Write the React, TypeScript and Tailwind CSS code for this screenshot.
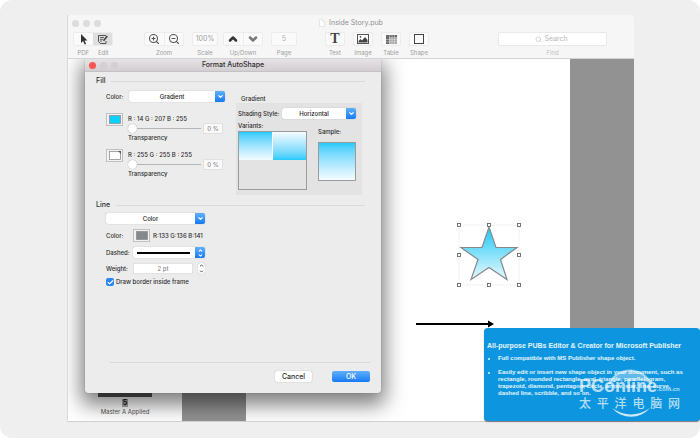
import type { ReactNode } from "react";
import clsx from "clsx";
import { Check, ChevronDown, ChevronUp, Search, ZoomIn, ZoomOut } from "lucide-react";

function TrafficLights({ active = false }: { active?: boolean }) {
  return (
    <div className="flex gap-1">
      <span className={clsx("h-[7px] w-[7px] rounded-full", active ? "bg-[#fc5650]" : "bg-[#dcdcdc]")} />
      <span className={clsx("h-[7px] w-[7px] rounded-full", active ? "bg-[#d2d0d2]" : "bg-[#dcdcdc]")} />
      <span className={clsx("h-[7px] w-[7px] rounded-full", active ? "bg-[#d2d0d2]" : "bg-[#dcdcdc]")} />
    </div>
  );
}

function ToolGroup({ labels, className, children }: { labels: string[]; className?: string; children: ReactNode }) {
  return (
    <div className={clsx("flex shrink-0 flex-col gap-[3px]", className)}>
      <div className="flex h-[14px] overflow-hidden rounded-xs border border-[#ececec] bg-[#fafafa]">{children}</div>
      <div className="flex justify-around text-[6px] leading-[8px] text-[#a0a0a0]">
        {labels.map((label) => (
          <span key={label}>{label}</span>
        ))}
      </div>
    </div>
  );
}

function ToolButton({ label, className, children }: { label: string; className?: string; children: ReactNode }) {
  return (
    <button type="button" aria-label={label} className={clsx("flex flex-1 items-center justify-center", className)}>
      {children}
    </button>
  );
}

function Toolbar() {
  return (
    <header className="h-[44px] shrink-0 rounded-t border-b border-[#d4d4d4] bg-[#f6f6f6]">
      <div className="relative flex h-4 items-center justify-center">
        <div className="absolute left-1">
          <TrafficLights />
        </div>
        <div className="flex items-center gap-1 text-[7px] leading-[8px] text-[#8f8f8f]">
          <svg width="6" height="8" viewBox="0 0 6 8" fill="#fff" stroke="#d8d8d8" strokeWidth=".6">
            <path d="M.5.5h3l2 2v5h-5z" />
            <path d="M3.5.5v2h2" />
          </svg>
          <h1>Inside Story.pub</h1>
        </div>
      </div>

      <div className="flex pt-px pr-[27px] pl-[5px]">
        <ToolGroup labels={["PDF", "Edit"]} className="w-10">
          <ToolButton label="PDF">
            <svg width="8" height="11" viewBox="0 0 8 11" fill="#333">
              <path d="M1 0v9l2.1-2 1.5 3.6 1.5-.7L4.600 6.500h2.900z" />
            </svg>
          </ToolButton>
          <ToolButton label="Edit" className="bg-[#dedede]">
            <svg width="11" height="11" viewBox="0 0 11 11" fill="none" stroke="#444">
              <path d="M9 1.500H1.500v6l2 2H9V7" strokeWidth=".9" />
              <path d="M3 3.500h4M3 5.300h3M3 7h2" strokeWidth=".8" />
              <path d="M10.300 2 6.500 6.800" strokeWidth="1.600" />
            </svg>
          </ToolButton>
        </ToolGroup>
        <ToolGroup labels={["Zoom"]} className="ml-[31px] w-10">
          <ToolButton label="Zoom in">
            <ZoomIn size={12} color="#555" strokeWidth={2.200} />
          </ToolButton>
          <ToolButton label="Zoom out" className="border-l border-[#ececec]">
            <ZoomOut size={12} color="#555" strokeWidth={2.200} />
          </ToolButton>
        </ToolGroup>
        <ToolGroup labels={["Scale"]} className="ml-2 w-[26px]">
          <input aria-label="Scale" defaultValue="100%" className="w-full text-center text-[7px] text-[#a0a0a0]" />
        </ToolGroup>
        <ToolGroup labels={["Up/Down"]} className="ml-[5px] w-10">
          <ToolButton label="Up">
            <ChevronUp size={12} color="#333" strokeWidth={5} />
          </ToolButton>
          <ToolButton label="Down" className="border-l border-[#ececec]">
            <ChevronDown size={12} color="#777" strokeWidth={5} />
          </ToolButton>
        </ToolGroup>
        <ToolGroup labels={["Page"]} className="ml-2 w-[26px]">
          <input aria-label="Page" defaultValue="5" className="w-full text-center text-[7px] text-[#b0b0b0]" />
        </ToolGroup>

        <ToolGroup labels={["Text"]} className="ml-[28px] w-5">
          <ToolButton label="Text">
            <span className="font-['Liberation_Serif',serif] text-[14px] leading-[12px] font-bold text-[#444]">T</span>
          </ToolButton>
        </ToolGroup>
        <ToolGroup labels={["Image"]} className="ml-2 w-5">
          <ToolButton label="Image">
            <svg width="12" height="10" viewBox="0 0 12 10">
              <rect x=".5" y=".5" width="11" height="9" fill="#fff" stroke="#555" />
              <path d="M1.500 8.500V7l2-2 1.500 1.500L8 3l2.500 3v2.500z" fill="#444" />
              <circle cx="3.500" cy="2.800" r=".9" fill="#444" />
            </svg>
          </ToolButton>
        </ToolGroup>
        <ToolGroup labels={["Table"]} className="ml-2 w-5">
          <ToolButton label="Table">
            <svg width="11" height="9" viewBox="0 0 11 9">
              <rect width="11" height="9" fill="#a5a5a5" />
              <path d="M0 0h11v2H0zM0 2h3v7H0z" fill="#6a6a6a" />
              <path d="M3.500 0v9M6 0v9M8.500 0v9M0 4.500h11M0 6.800h11" stroke="#e2e2e2" strokeWidth=".5" />
            </svg>
          </ToolButton>
        </ToolGroup>
        <ToolGroup labels={["Shape"]} className="ml-2 w-5">
          <ToolButton label="Shape">
            <span className="h-[10px] w-[10px] border border-[#444]" />
          </ToolButton>
        </ToolGroup>

        <div className="ml-auto flex w-[109px] flex-col gap-[3px]">
          <label className="flex h-[14px] items-center justify-center gap-[3px] rounded-xs border border-[#e9e9e9] bg-white">
            <Search size={7} color="#bbb" />
            <input
              type="text"
              aria-label="Find"
              placeholder="Search"
              className="w-[26px] text-[7px] leading-[8px] placeholder:text-[#b8b8b8]"
            />
          </label>
          <span className="text-center text-[6px] leading-[8px] text-[#c4c4c4]">Find</span>
        </div>
      </div>
    </header>
  );
}

function Dropdown({ label, value, className }: { label: string; value: string; className?: string }) {
  return (
    <div className={clsx("flex h-[11px] overflow-hidden rounded-xs bg-white shadow-[0_0_1px_#999]", className)}>
      <select
        aria-label={label}
        className="min-w-0 flex-1 appearance-none text-center text-[6px] leading-[11px] font-medium text-[#222] [text-align-last:center]"
      >
        <option>{value}</option>
      </select>
      <span className="flex w-[10px] items-center justify-center bg-linear-to-b from-[#5fb0fa] to-[#1479f5]">
        <ChevronDown size={7} color="#fff" strokeWidth={4} />
      </span>
    </div>
  );
}

function Swatch({ label, fill, corner = false }: { label: string; fill: string; corner?: boolean }) {
  return (
    <button
      type="button"
      aria-label={label}
      className="flex h-[13px] w-[17px] shrink-0 items-center justify-center border border-[#c0c0c0] bg-[#f2f2f2]"
    >
      <svg width="12" height="9" viewBox="0 0 12 9">
        <rect x=".5" y=".5" width="11" height="8" fill={fill} stroke="#8f8f8f" strokeWidth=".8" />
        {corner && <path d="M9 0h3v3z" fill="#555" />}
      </svg>
    </button>
  );
}

function ColorStop({ id, rgb, fill, corner }: { id: string; rgb: string; fill: string; corner?: boolean }) {
  return (
    <div className="flex h-9 gap-[5px]">
      <Swatch label={rgb} fill={fill} corner={corner} />
      <div className="flex-1 pt-[2px]">
        <p className="leading-[8px] whitespace-nowrap">{rgb}</p>
        <div className="flex h-[11px] items-center">
          <input
            id={id}
            type="range"
            defaultValue={0}
            className="h-[9px] w-[73px] appearance-none bg-[linear-gradient(#b4b4b4,#b4b4b4)] bg-[length:100%_1px] bg-center bg-no-repeat [&::-webkit-slider-thumb]:h-[9px] [&::-webkit-slider-thumb]:w-[9px] [&::-webkit-slider-thumb]:appearance-none [&::-webkit-slider-thumb]:rounded-full [&::-webkit-slider-thumb]:bg-white [&::-webkit-slider-thumb]:shadow-[0_0_1px_#888]"
          />
          <input
            aria-label={`${rgb} transparency`}
            defaultValue="0 %"
            className="ml-[2px] h-[11px] w-5 border border-[#e0e0e0] bg-[#f9f9f9] text-center text-[6px] text-[#888]"
          />
        </div>
        <label htmlFor={id} className="block leading-[8px]">
          Transparency
        </label>
      </div>
    </div>
  );
}

function SectionTitle({ children }: { children: ReactNode }) {
  return (
    <div className="flex items-center gap-[6px] pr-[5px]">
      <h3 className="text-[7px] leading-[10px]">{children}</h3>
      <span className="h-px flex-1 bg-[#dadada]" />
    </div>
  );
}

function FillSection() {
  return (
    <section>
      <SectionTitle>Fill</SectionTitle>
      <div className="flex pt-[5px] pl-[10px]">
        <div className="w-[119px]">
          <div className="flex h-[11px] items-center justify-between">
            <span>Color:</span>
            <Dropdown label="Fill color" value="Gradient" className="w-24" />
          </div>
          <div className="pt-[11px]">
            <ColorStop id="first-transparency" rgb="R : 14 G : 207 B : 255" fill="#0ecfff" />
            <ColorStop id="second-transparency" rgb="R : 255 G : 255 B : 255" fill="#ffffff" corner />
          </div>
        </div>

        <div className="ml-[11px] w-[126px] pt-[4px]">
          <h4 className="pl-[5px] leading-[8px]">Gradient</h4>
          <div className="h-[92px] border border-[#e2e2e2] bg-[#e3e3e3] pt-[4px] pr-[5px] pl-px">
            <div className="flex items-center justify-between">
              <span className="whitespace-nowrap">Shading Style:</span>
              <Dropdown label="Shading Style" value="Horizontal" className="w-[74px]" />
            </div>
            <div className="flex gap-[11px] pt-[3px]">
              <div>
                <p className="leading-[8px]">Variants:</p>
                <div className="mt-px flex h-[59px] w-[69px] items-start border border-[#9b9b9b]">
                  <button
                    type="button"
                    aria-label="Light bottom"
                    className="h-[28px] flex-1 bg-linear-to-b from-[#1ecbfa] to-[#f4fcff]"
                  />
                  <button
                    type="button"
                    aria-label="Light top"
                    className="h-[28px] flex-1 border-l border-white bg-linear-to-b from-[#f4fcff] to-[#1ecbfa]"
                  />
                </div>
              </div>
              <div className="pt-[6px]">
                <p className="leading-[8px]">Sample:</p>
                <div className="mt-[6px] h-[39px] w-[38px] border border-[#9b9b9b] bg-linear-to-b from-[#1ecbfa] to-[#f4fcff]" />
              </div>
            </div>
          </div>
        </div>
      </div>
    </section>
  );
}

function LineSection() {
  return (
    <section className="pt-[5px]">
      <SectionTitle>Line</SectionTitle>
      <div className="flex w-[109px] flex-col gap-[5px] pt-[3px] pl-[10px]">
        <Dropdown label="Line type" value="Color" />
        <div className="flex items-center">
          <span className="w-[27px]">Color:</span>
          <Swatch label="Line color" fill="#85888d" />
          <span className="ml-[3px] whitespace-nowrap">R:133 G:136 B:141</span>
        </div>
        <div className="flex h-[11px] items-center">
          <label htmlFor="dashed" className="w-[27px]">
            Dashed:
          </label>
          <div className="relative flex h-[11px] flex-1 overflow-hidden rounded-xs bg-white shadow-[0_0_1px_#999]">
            <select id="dashed" className="min-w-0 flex-1 appearance-none">
              <option aria-label="Solid" />
            </select>
            <span className="pointer-events-none absolute inset-x-[4px] top-[5px] mr-[11px] h-[2px] bg-black" />
            <span className="flex w-[10px] flex-col items-center justify-center bg-linear-to-b from-[#5fb0fa] to-[#1479f5]">
              <ChevronUp size={5} color="#fff" strokeWidth={5} />
              <ChevronDown size={5} color="#fff" strokeWidth={5} />
            </span>
          </div>
        </div>
        <div className="flex h-[11px] items-center">
          <label htmlFor="weight" className="w-[27px]">
            Weight:
          </label>
          <input
            id="weight"
            defaultValue="2 pt"
            className="h-[11px] w-[60px] border border-[#e2e2e2] bg-white text-center text-[6px] text-[#888]"
          />
          <button
            type="button"
            aria-label="Change weight"
            className="ml-auto flex h-[11px] w-[7px] flex-col items-center justify-between rounded-[3px] bg-white shadow-[0_0_1px_#999]"
          >
            <ChevronUp size={5} color="#333" strokeWidth={4} />
            <ChevronDown size={5} color="#333" strokeWidth={4} />
          </button>
        </div>
      </div>
      <label className="flex items-center gap-[2px] pt-[4px] pl-[10px] leading-[8px]">
        <span className="relative flex h-2 w-2 items-center justify-center">
          <input
            type="checkbox"
            defaultChecked
            className="peer h-2 w-2 appearance-none rounded-xs bg-white checked:bg-[#2a87f6]"
          />
          <Check
            size={7}
            color="#fff"
            strokeWidth={4}
            className="pointer-events-none absolute hidden peer-checked:block"
          />
        </span>
        Draw border inside frame
      </label>
    </section>
  );
}

function FormatDialog() {
  return (
    <div
      role="dialog"
      aria-label="Format AutoShape"
      className="absolute top-0 left-[17px] w-[296px] rounded-b-[3px] bg-[#ececec] text-[6px] font-medium text-[#2c2c2c] shadow-[0_8px_20px_4px_rgba(0,0,0,0.5),0_0_1px_#777]"
    >
      <div className="relative flex h-[13px] items-center justify-center border-b border-[#c4c2c4] bg-linear-to-b from-[#e6e2e6] to-[#d2ced2]">
        <div className="absolute left-1">
          <TrafficLights active />
        </div>
        <h2 className="text-[7px] leading-[10px]">Format AutoShape</h2>
      </div>
      <div className="px-[11px] pt-[4px] pb-[11px]">
        <FillSection />
        <LineSection />
        <div className="mt-[76px] ml-[14px] flex justify-end gap-5 border-t border-[#dadada] pt-[8px]">
          <button
            type="button"
            className="h-[11px] w-[37px] rounded-xs bg-white text-[7px] leading-[11px] shadow-[0_0_1px_#888]"
          >
            Cancel
          </button>
          <button
            type="button"
            className="h-[11px] w-[38px] rounded-xs bg-linear-to-b from-[#5fb0fa] to-[#1479f5] text-[7px] leading-[11px] text-white"
          >
            OK
          </button>
        </div>
      </div>
    </div>
  );
}

const HANDLES = [
  [2, 2], [32, 2], [62, 2], [2, 32], [62, 32], [2, 62], [32, 62], [62, 62],
];

function Canvas() {
  return (
    <div className="relative flex-1 bg-white">
      <svg className="absolute top-[164px] left-[211px]" width="64" height="64" viewBox="0 0 64 64">
        <defs>
          <linearGradient id="star" x1="0" y1="0" x2="0" y2="1">
            <stop offset="0" stopColor="#1cc6f6" />
            <stop offset="1" stopColor="#e9faff" />
          </linearGradient>
        </defs>
        <path d="M2 2h60v60H2z" fill="none" stroke="#f2f2f2" />
        <path
          d="M32 4l7 20.500h21L43.500 36.500l6.500 20L32 44.500 14 56.500l7-20L4 24.500h21z"
          fill="url(#star)"
          stroke="#85888d"
          strokeWidth="1.200"
        />
        {HANDLES.map(([x, y]) => (
          <rect key={`${x}-${y}`} x={x - 1.5} y={y - 1.5} width="3" height="3" fill="#fff" stroke="#666" strokeWidth=".9" />
        ))}
      </svg>
      <svg className="absolute top-[261px] left-[169px]" width="80" height="8" viewBox="0 0 80 8">
        <path d="M1 3h72V.5L79 4l-6 3.500V5H1z" fill="#000" />
      </svg>
    </div>
  );
}

function Watermark() {
  return (
    <div className="pointer-events-none absolute top-[50px] left-[95px] text-white/70">
      <svg className="absolute -top-[16px] left-[21px]" width="60" height="60" viewBox="0 0 60 60">
        <path d="M9 22A23 23 0 0 1 51 22Q30 12 9 22z" fill="#fff" fillOpacity=".35" />
        <path d="M9 22A23 23 0 0 1 51 22" fill="none" stroke="#fff" strokeOpacity=".5" strokeWidth="2" />
        <path d="M12 46A25 25 0 0 0 50 46Q31 59 12 46z" fill="#fff" fillOpacity=".8" />
      </svg>
      <div className="flex items-end leading-[17px]">
        <span className="text-[18px] font-bold">PConline</span>
        <span className="text-[6px] leading-[11px]">.com.cn</span>
      </div>
      <p className="flex w-[101px] justify-between pt-px font-['Noto_Sans_CJK_SC',sans-serif] text-[12px] leading-[13px] font-medium">
        {Array.from("太平洋电脑网").map((char) => (
          <span key={char}>{char}</span>
        ))}
      </p>
    </div>
  );
}

function PromoCard() {
  return (
    <aside className="absolute right-0 bottom-[17px] h-[93px] w-[216px] overflow-hidden rounded-[4px] bg-[#0d96df] pt-[13px] pl-[3px] font-['Liberation_Sans',Arial,sans-serif] text-[6px] leading-[7px] font-bold text-white/90 shadow-[0_1px_1px_#777]">
      <h2 className="text-[7px] leading-[10px] whitespace-nowrap">
        All-purpose PUBs Editor &amp; Creator for Microsoft Publisher
      </h2>
      <ul className="list-disc space-y-[7px] pt-[4px] pl-[11px]">
        <li>Full compatible with MS Publisher shape object.</li>
        <li className="whitespace-nowrap">
          Easily edit or insert new shape object in your document, such as
          <br />
          rectangle, rounded rectangle, oval, triangle, parallelogram,
          <br />
          trapezoid, diamond, pentagon, circle, arrow, star, line, curve,
          <br />
          dashed line, scribble, and so on.
        </li>
      </ul>
      <Watermark />
    </aside>
  );
}

export default function App() {
  return (
    <main className="min-h-screen bg-white font-[Inter,sans-serif]">
      <div className="relative flex min-h-screen flex-col rounded-xl bg-[#efefef] pt-[15px] pr-[66px] pb-[16px] pl-[67px]">
        <div className="flex flex-1 flex-col border-l border-[#d9d9d9]">
          <Toolbar />
          <div className="relative flex flex-1 overflow-hidden border-b border-[#d0d0d0]">
            <nav className="flex w-[114px] flex-col items-center justify-end bg-white pb-[5px]">
              <span className="h-10 w-[54px] bg-[#555]" />
              <span className="mt-[2px] bg-[#aaa] px-px text-[7px] leading-[8px] font-bold text-[#222]">5</span>
              <span className="mt-px text-[6px] leading-[8px] text-[#555]">Master A Applied</span>
            </nav>
            <div className="w-16 bg-[#929292]" />
            <Canvas />
            <div className="w-16 bg-[#929292]" />
            <FormatDialog />
          </div>
        </div>
        <PromoCard />
      </div>
    </main>
  );
}
